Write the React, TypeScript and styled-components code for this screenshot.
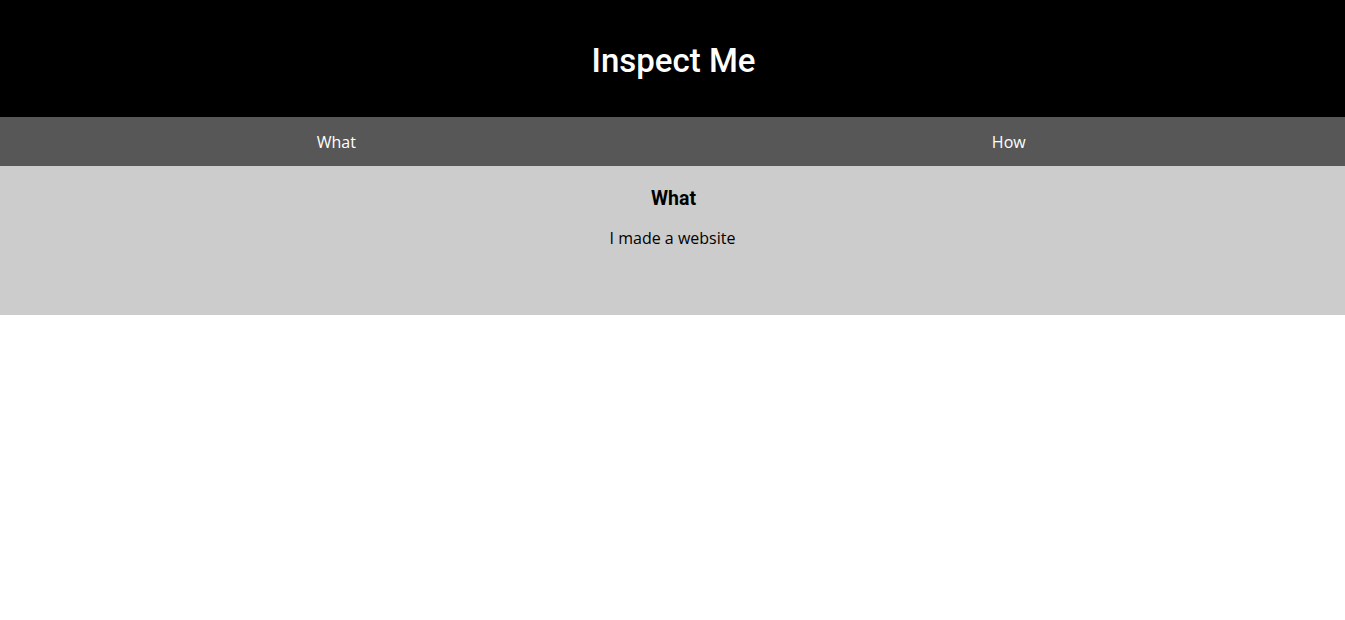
import React from 'react';
import styled, { createGlobalStyle } from 'styled-components';

const GlobalStyle = createGlobalStyle`
  body {
    margin: 0;
    background: #ffffff;
    font-family: 'Open Sans', sans-serif;
  }
`;

const Header = styled.header`
  height: 117px;
  background: #000000;
  display: flex;
  align-items: center;
  justify-content: center;
`;

const Title = styled.h1`
  margin: 0;
  padding: 4px 0 0 2px;
  font-family: Roboto, sans-serif;
  font-weight: 500;
  font-size: 33px;
  color: #ffffff;
`;

const Nav = styled.nav`
  height: 49px;
  background: #575757;
  display: grid;
  grid-template-columns: 1fr 1fr;
`;

const NavItem = styled.a`
  display: flex;
  align-items: center;
  justify-content: center;
  color: #ffffff;
  font-size: 16px;
  text-decoration: none;
  padding-top: 1px;
`;

const Section = styled.section`
  background: #cccccc;
  padding: 22px 0 66px;
  text-align: center;
`;

const Heading = styled.h2`
  margin: 0;
  padding-left: 2px;
  font-family: Roboto, sans-serif;
  font-weight: 700;
  font-size: 19.5px;
  line-height: 22px;
  color: #000000;
`;

const Text = styled.p`
  margin: 17px 0 0;
  font-size: 16px;
  line-height: 22px;
  color: #000000;
`;

const App: React.FC = () => {
  return (
    <>
      <GlobalStyle />
      <Header>
        <Title>Inspect Me</Title>
      </Header>
      <Nav>
        <NavItem href="#what">What</NavItem>
        <NavItem href="#how">How</NavItem>
      </Nav>
      <Section id="what">
        <Heading>What</Heading>
        <Text>I made a website</Text>
      </Section>
    </>
  );
};

export default App;
